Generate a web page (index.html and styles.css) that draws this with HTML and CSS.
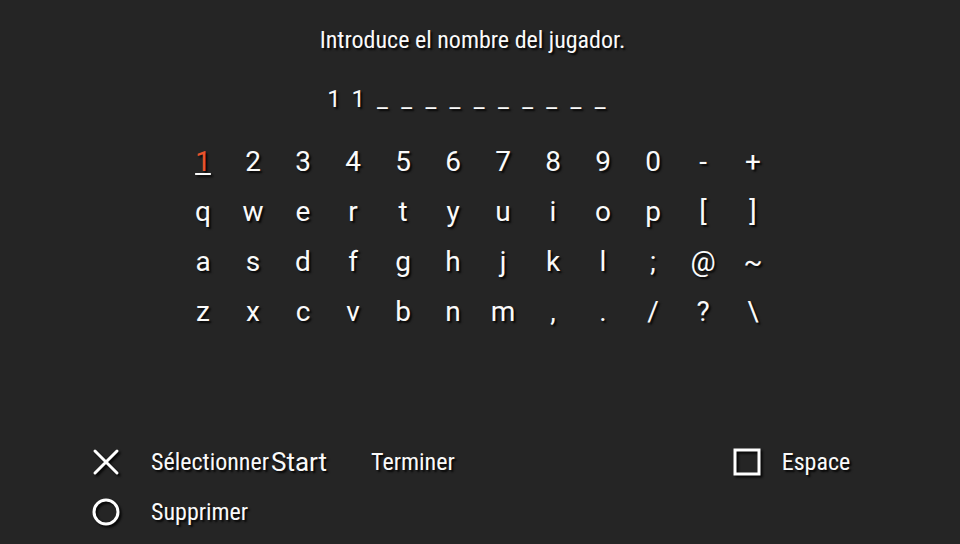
FILE: index.html
```html
<!DOCTYPE html>
<html>
<head>
<meta charset="utf-8">
<link rel="stylesheet" href="styles.css">
</head>
<body>
<div class="screen">
  <div class="title">Introduce el nombre del jugador.</div>
  <div class="name">
    <span class="slot">1</span><span class="slot">1</span><span class="slot">_</span><span class="slot">_</span><span class="slot">_</span><span class="slot">_</span><span class="slot">_</span><span class="slot">_</span><span class="slot">_</span><span class="slot">_</span><span class="slot">_</span><span class="slot">_</span>
  </div>
  <div class="keys">
    <span class="key sel">1</span><span class="key">2</span><span class="key">3</span><span class="key">4</span><span class="key">5</span><span class="key">6</span><span class="key">7</span><span class="key">8</span><span class="key">9</span><span class="key">0</span><span class="key">-</span><span class="key">+</span>
    <span class="key">q</span><span class="key">w</span><span class="key">e</span><span class="key">r</span><span class="key">t</span><span class="key">y</span><span class="key">u</span><span class="key">i</span><span class="key">o</span><span class="key">p</span><span class="key">[</span><span class="key">]</span>
    <span class="key">a</span><span class="key">s</span><span class="key">d</span><span class="key">f</span><span class="key">g</span><span class="key">h</span><span class="key">j</span><span class="key">k</span><span class="key">l</span><span class="key">;</span><span class="key">@</span><span class="key">~</span>
    <span class="key">z</span><span class="key">x</span><span class="key">c</span><span class="key">v</span><span class="key">b</span><span class="key">n</span><span class="key">m</span><span class="key">,</span><span class="key">.</span><span class="key">/</span><span class="key">?</span><span class="key">\</span>
  </div>
  <div class="legend">
    <div class="lrow">
      <svg class="icon" viewBox="0 0 28 28"><path d="M3 3 L25 25 M25 3 L3 25" stroke="#fff" stroke-width="3" stroke-linecap="round" fill="none"/></svg>
      <span class="label">Sélectionner</span><span class="start">Start</span>
      <span class="label term">Terminer</span>
      <svg class="icon sq" viewBox="0 0 28 28"><rect x="2" y="2" width="24" height="24" stroke="#fff" stroke-width="3" fill="none"/></svg>
      <span class="label esp">Espace</span>
    </div>
    <div class="lrow">
      <svg class="icon" viewBox="0 0 28 28"><circle cx="14" cy="14" r="12" stroke="#fff" stroke-width="3" fill="none"/></svg>
      <span class="label">Supprimer</span>
    </div>
  </div>
</div>
</body>
</html>
```
FILE: styles.css
```css
html, body {
  margin: 0;
  padding: 0;
  background: #252525;
}
.screen {
  width: 960px;
  height: 544px;
  background: #252525;
  color: #fafafa;
  font-family: Roboto, "Noto Sans", sans-serif;
  text-shadow: 2px 2px 2px rgba(0,0,0,0.85);
  overflow: hidden;
}
.title {
  padding-top: 25px;
  height: 30px;
  line-height: 30px;
  font-size: 24px;
  font-stretch: 75%;
  text-align: center;
  padding-right: 15px;
}
.name {
  display: flex;
  padding-left: 322px;
  margin-top: 28px;
  height: 32px;
  line-height: 32px;
  font-size: 24px;
}
.slot {
  width: 24.2px;
  text-align: center;
}
.keys {
  display: grid;
  grid-template-columns: repeat(12, 50px);
  grid-auto-rows: 50px;
  margin-left: 178px;
  margin-top: 21px;
}
.key {
  display: flex;
  align-items: center;
  justify-content: center;
  font-size: 28px;
}
.key.sel {
  color: #e9532c;
  text-decoration: underline;
  text-decoration-color: #fafafa;
  text-decoration-thickness: 2px;
  text-underline-offset: 2px;
}
.legend {
  margin-top: 101px;
  padding-left: 92px;
}
.lrow {
  display: flex;
  align-items: center;
  height: 50px;
}
.icon {
  width: 28px;
  height: 28px;
  margin-right: 31px;
  filter: drop-shadow(2px 2px 1px rgba(0,0,0,0.85));
}
.label {
  font-size: 24px;
  font-stretch: 75%;
}
.start {
  font-size: 26px;
  margin-left: 2px;
}
.term {
  margin-left: 44px;
}
.sq {
  margin-left: 278px;
  margin-right: 21px;
}
```
